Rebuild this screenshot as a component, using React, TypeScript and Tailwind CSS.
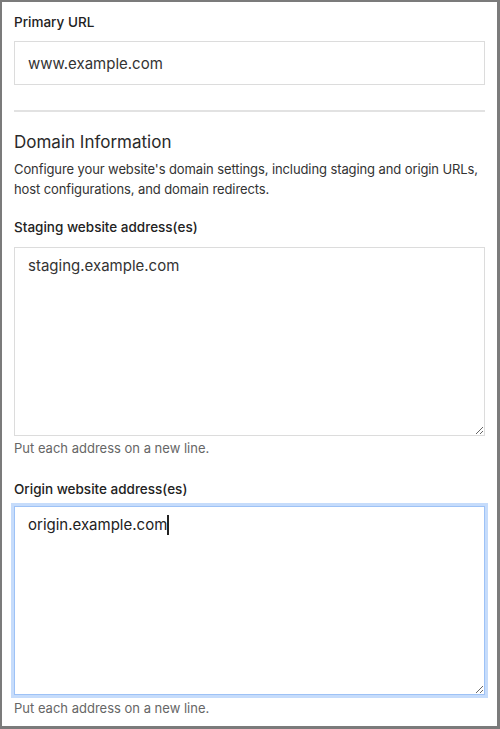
const font = { fontFamily: "Inter, 'Noto Sans', sans-serif" };

export default function App() {
  return (
    <main
      style={font}
      className="w-[500px] h-[729px] bg-white border-t-2 border-l-2 border-r-[3px] border-b-[3px] border-[#7b7b7b] px-3 pt-[10px] overflow-hidden"
    >
      <label className="block text-[13.5px] leading-5 font-medium text-[#222]">Primary URL</label>
      <input
        readOnly
        value="www.example.com"
        className="mt-[9px] block w-full h-11 border border-[#dcdcdc] px-[13px] text-[15px] text-[#333] outline-none"
      />

      <div className="mt-[25px] h-[2px] bg-[#e2e2e2]" />

      <h2 className="mt-4 text-[17px] leading-7 text-[#2a2a2a]">Domain Information</h2>
      <p className="mt-[3px] text-[13px] leading-5 tracking-[-0.1px] text-[#333]">
        <span className="whitespace-nowrap">
          Configure your website's domain settings, including staging and origin URLs,
        </span>
        <br />
        host configurations, and domain redirects.
      </p>

      <label className="mt-[18px] block text-[13.5px] leading-5 font-medium text-[#222]">
        Staging website address(es)
      </label>
      <textarea
        readOnly
        defaultValue="staging.example.com"
        className="mt-[10px] block w-full h-[189px] border border-[#dcdcdc] px-[13px] py-[6px] text-[15px] leading-6 text-[#333] outline-none"
      />
      <p className="mt-[2px] text-[13px] leading-5 text-[#666]">Put each address on a new line.</p>

      <label className="mt-[21px] block text-[13.5px] leading-5 font-medium text-[#222]">
        Origin website address(es)
      </label>
      <div className="relative mt-[7px]">
        <textarea
          readOnly
          defaultValue="origin.example.com"
          className="block w-full h-[189px] border border-[#9ec2f6] shadow-[0_0_0_3px_#c6dcfb] px-[13px] py-[6px] text-[15px] leading-6 text-[#222] caret-transparent outline-none"
        />
        {/* caret overlay, mirrors the textarea text */}
        <div className="pointer-events-none absolute left-0 top-0 border border-transparent px-[13px] py-[6px] text-[15px] leading-6 text-transparent">
          origin.example.com
          <span className="inline-block w-[1.5px] h-[20px] bg-[#222] align-[-5px]" />
        </div>
      </div>
      <p className="mt-[3px] text-[13px] leading-5 text-[#666]">Put each address on a new line.</p>
    </main>
  );
}
